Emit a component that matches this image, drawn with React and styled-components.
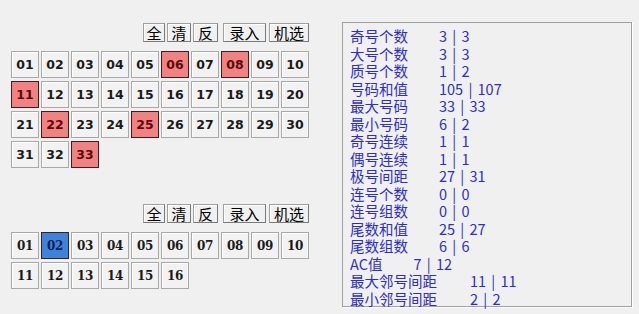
import React from "react";
import styled, { createGlobalStyle } from "styled-components";

const Global = createGlobalStyle`
  html, body {
    margin: 0;
    padding: 0;
    background: #f0f0f0;
  }
  body {
    width: 639px;
    height: 314px;
    overflow: hidden;
    font-family: "Noto Sans CJK SC", "Liberation Sans", sans-serif;
  }
`;

const Page = styled.div`
  display: flex;
  width: 639px;
  height: 314px;
  background: #f0f0f0;
`;

const LeftColumn = styled.div`
  width: 331px;
  padding: 23px 0 0 11px;
  display: flex;
  flex-direction: column;
`;

const Section = styled.div`
  width: 298px;
  display: flex;
  flex-direction: column;
  margin-top: ${(p) => p.$top || 0}px;
`;

const Toolbar = styled.div`
  display: flex;
  justify-content: flex-end;
  height: 19px;
  margin-bottom: 9px;
`;

const ToolButton = styled.button`
  width: ${(p) => p.$w}px;
  height: 19px;
  margin-left: ${(p) => p.$gap}px;
  padding: 0;
  background: #f0f0f0;
  border: 1px solid #a0a0a0;
  border-right-color: #7a7a7a;
  border-bottom-color: #7a7a7a;
  box-shadow: inset 1px 1px 0 #fff;
  font-family: "Noto Sans CJK SC", sans-serif;
  font-size: 15px;
  line-height: 17px;
  color: #000;
`;

const Grid = styled.div`
  display: grid;
  grid-template-columns: repeat(10, 28px);
  grid-auto-rows: 27px;
  column-gap: 2px;
  row-gap: 3px;
`;

const Ball = styled.div`
  display: flex;
  align-items: center;
  justify-content: center;
  box-sizing: border-box;
  border: 1px solid ${(p) => (p.$on ? "#3a2020" : "#a8a8a8")};
  background: ${(p) => (p.$on ? p.$on : "#f2f2f2")};
  box-shadow: ${(p) => (p.$on ? "none" : "inset 1px 1px 0 #fff")};
  font-family: ${(p) =>
    p.$serif ? '"DejaVu Serif", serif' : '"DejaVu Sans", sans-serif'};
  font-weight: bold;
  font-size: ${(p) => (p.$serif ? 12 : 12.5)}px;
  letter-spacing: ${(p) => (p.$serif ? "-0.3px" : "0")};
  color: ${(p) => (p.$ink ? p.$ink : "#1a1a1a")};
`;

const StatsBox = styled.div`
  margin-top: 22px;
  width: 290px;
  height: 285px;
  border: 1px solid #a0a0a0;
  box-shadow: 1px 1px 0 #fff;
  padding: 4px 0 0 7px;
  box-sizing: border-box;
  background: #f0f0f0;
`;

const StatRow = styled.div`
  display: flex;
  gap: ${(p) => (p.$wide ? 33 : 31)}px;
  height: 17.5px;
  line-height: 17.5px;
  font-size: 14.5px;
  color: #2e2ec4;
  white-space: nowrap;
`;

const StatValue = styled.span`
  word-spacing: 2px;
`;

const redBalls = [6, 8, 11, 22, 25, 33];
const blueBalls = [2];

const stats = [
  ["奇号个数", "3 | 3"],
  ["大号个数", "3 | 3"],
  ["质号个数", "1 | 2"],
  ["号码和值", "105 | 107"],
  ["最大号码", "33 | 33"],
  ["最小号码", "6 | 2"],
  ["奇号连续", "1 | 1"],
  ["偶号连续", "1 | 1"],
  ["极号间距", "27 | 31"],
  ["连号个数", "0 | 0"],
  ["连号组数", "0 | 0"],
  ["尾数和值", "25 | 27"],
  ["尾数组数", "6 | 6"],
  ["AC值", "7 | 12"],
  ["最大邻号间距", "11 | 11"],
  ["最小邻号间距", "2 | 2"],
];

const tools = [
  { label: "全", w: 22, gap: 0 },
  { label: "清", w: 24, gap: 2 },
  { label: "反", w: 25, gap: 2 },
  { label: "录入", w: 43, gap: 5 },
  { label: "机选", w: 40, gap: 3 },
];

const pad = (n) => String(n).padStart(2, "0");

const Tools = () => (
  <Toolbar>
    {tools.map((t) => (
      <ToolButton key={t.label} $w={t.w} $gap={t.gap}>
        {t.label}
      </ToolButton>
    ))}
  </Toolbar>
);

export default function App() {
  return (
    <Page>
      <Global />
      <LeftColumn>
        <Section>
          <Tools />
          <Grid>
            {Array.from({ length: 33 }, (_, i) => i + 1).map((n) => (
              <Ball
                key={`red-${n}`}
                $on={redBalls.includes(n) ? "#f28282" : null}
                $ink={redBalls.includes(n) ? "#5a0c0c" : null}
              >
                {pad(n)}
              </Ball>
            ))}
          </Grid>
        </Section>
        <Section $top={36}>
          <Tools />
          <Grid>
            {Array.from({ length: 16 }, (_, i) => i + 1).map((n) => (
              <Ball
                key={`blue-${n}`}
                $serif
                $on={blueBalls.includes(n) ? "#3f82dc" : null}
                $ink={blueBalls.includes(n) ? "#0c1e55" : null}
              >
                {pad(n)}
              </Ball>
            ))}
          </Grid>
        </Section>
      </LeftColumn>
      <StatsBox>
        {stats.map(([label, value]) => (
          <StatRow key={label} $wide={label.length > 4}>
            <span>{label}</span>
            <StatValue>{value}</StatValue>
          </StatRow>
        ))}
      </StatsBox>
    </Page>
  );
}
